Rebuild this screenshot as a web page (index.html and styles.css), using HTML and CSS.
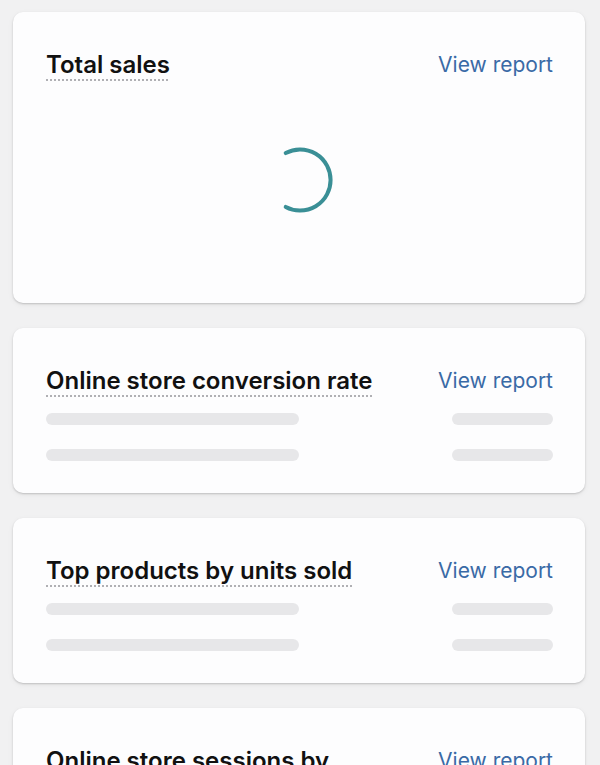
FILE: index.html
```html
<!DOCTYPE html>
<html lang="en">
<head>
    <meta charset="UTF-8">
    <meta name="viewport" content="width=device-width, initial-scale=1.0">
    <title>Analytics</title>
    <link rel="stylesheet" href="styles.css">
</head>
<body>

    <div class="cards">
        <!-- Total sales (loading) -->
        <div class="card">
            <div class="card-header">
                <h2 class="card-title"><span>Total sales</span></h2>
                <a class="card-link" href="#">View report</a>
            </div>
            <div class="spinner-area">
                <svg class="spinner" width="66" height="66" viewBox="0 0 66 66">
                    <path d="M18.7 6.1 A30.5 30.5 0 1 1 18.7 59.9" fill="none" stroke="#3a8f96" stroke-width="4" stroke-linecap="round"/>
                </svg>
            </div>
        </div>

        <div class="card">
            <div class="card-header">
                <h2 class="card-title"><span>Online store conversion rate</span></h2>
                <a class="card-link" href="#">View report</a>
            </div>
            <div class="skeleton">
                <div class="skeleton-row"><span class="bar bar-long"></span><span class="bar bar-short"></span></div>
                <div class="skeleton-row"><span class="bar bar-long"></span><span class="bar bar-short"></span></div>
            </div>
        </div>

        <div class="card">
            <div class="card-header">
                <h2 class="card-title"><span>Top products by units sold</span></h2>
                <a class="card-link" href="#">View report</a>
            </div>
            <div class="skeleton">
                <div class="skeleton-row"><span class="bar bar-long"></span><span class="bar bar-short"></span></div>
                <div class="skeleton-row"><span class="bar bar-long"></span><span class="bar bar-short"></span></div>
            </div>
        </div>

        <div class="card">
            <div class="card-header">
                <h2 class="card-title"><span>Online store sessions by location</span></h2>
                <a class="card-link" href="#">View report</a>
            </div>
            <div class="skeleton">
                <div class="skeleton-row"><span class="bar bar-long"></span><span class="bar bar-short"></span></div>
                <div class="skeleton-row"><span class="bar bar-long"></span><span class="bar bar-short"></span></div>
            </div>
        </div>
    </div>

</body>
</html>
```

FILE: styles.css
```css
body {
    margin: 0;
    background-color: #f1f1f2;
    font-family: Inter, "Noto Sans", sans-serif;
    color: #111;
}
.cards {
    display: flex;
    flex-direction: column;
    gap: 25px;
    padding: 12px 15px 0 13px;
}
.card {
    background-color: #fdfdfe;
    border-radius: 10px;
    box-shadow: 0 1px 2px rgba(0, 0, 0, 0.18), 0 2px 6px rgba(0, 0, 0, 0.05);
    padding: 38px 32px 32px 33px;
}
.card-header {
    display: flex;
    justify-content: space-between;
    align-items: flex-start;
    gap: 24px;
}
.card-title {
    margin: 0;
    font-size: 24px;
    font-weight: 600;
    line-height: 30px;
    max-width: 370px;
}
.card-title span {
    text-decoration: underline dotted #b0b0b4;
    text-decoration-thickness: 2px;
    text-underline-offset: 6px;
}
.card-link {
    color: #3a6aa6;
    text-decoration: none;
    font-size: 21px;
    line-height: 30px;
    white-space: nowrap;
}
.spinner-area {
    display: flex;
    justify-content: center;
    padding: 67px 0 58px;
}
.skeleton {
    display: flex;
    flex-direction: column;
    gap: 24px;
    margin-top: 17px;
}
.skeleton-row {
    display: flex;
    justify-content: space-between;
}
.bar {
    height: 12px;
    border-radius: 6px;
    background-color: #e7e7e9;
}
.bar-long {
    width: 253px;
}
.bar-short {
    width: 101px;
}
```
